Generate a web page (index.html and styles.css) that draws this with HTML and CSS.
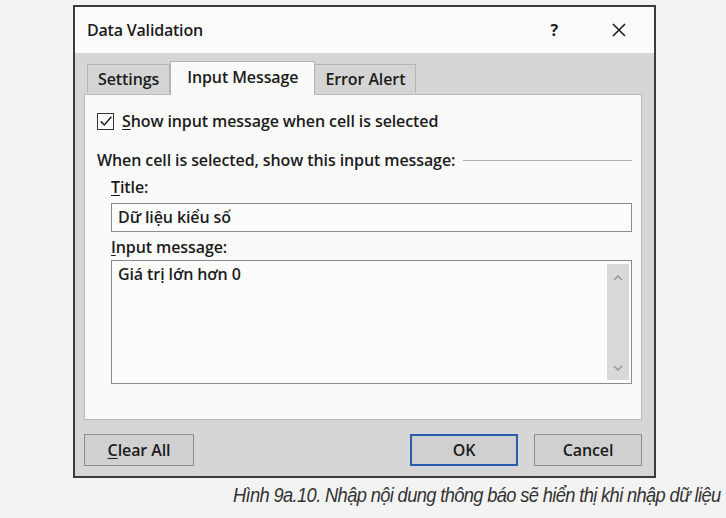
FILE: index.html
```html
<!DOCTYPE html>
<html lang="vi">
<head>
<meta charset="utf-8">
<title>Data Validation</title>
<link rel="stylesheet" href="styles.css">
</head>
<body>
<div class="page">
  <div class="dialog">
    <div class="titlebar">
      <span class="title">Data Validation</span>
      <span class="help">?</span>
      <span class="close">
        <svg width="14" height="14" viewBox="0 0 14 14"><path d="M1 1 L13 13 M13 1 L1 13" stroke="#1f1f1f" stroke-width="1.6" fill="none"/></svg>
      </span>
    </div>
    <div class="body">
      <div class="tabs">
        <div class="tab">Settings</div>
        <div class="tab active">Input Message</div>
        <div class="tab">Error Alert</div>
      </div>
      <div class="panel">
        <div class="check">
          <span class="box">
            <svg width="14" height="14" viewBox="0 0 12 12"><path d="M1.5 6.3 L4.6 9.4 L10.6 2.4" stroke="#222" stroke-width="1.3" fill="none"/></svg>
          </span>
          <span><u>S</u>how input message when cell is selected</span>
        </div>
        <div class="group">
          <span>When cell is selected, show this input message:</span>
          <span class="rule"></span>
        </div>
        <div class="fields">
          <div class="label"><u>T</u>itle:</div>
          <div class="input">Dữ liệu kiểu số</div>
          <div class="label"><u>I</u>nput message:</div>
          <div class="textarea">
            <div class="text">Giá trị lớn hơn 0</div>
            <div class="scroll">
              <svg width="10" height="6" viewBox="0 0 10 6"><path d="M1 5 L5 1 L9 5" stroke="#9a9a9a" stroke-width="1.6" fill="none"/></svg>
              <svg width="10" height="6" viewBox="0 0 10 6"><path d="M1 1 L5 5 L9 1" stroke="#9a9a9a" stroke-width="1.6" fill="none"/></svg>
            </div>
          </div>
        </div>
      </div>
      <div class="buttons">
        <button class="btn"><u>C</u>lear All</button>
        <span class="spacer"></span>
        <button class="btn default">OK</button>
        <button class="btn">Cancel</button>
      </div>
    </div>
  </div>
  <p class="caption"><span>Hình 9a.10. Nhập nội dung thông báo sẽ hiển thị khi nhập dữ liệu</span></p>
</div>
</body>
</html>
```

FILE: styles.css
```css
html, body {
  margin: 0;
  padding: 0;
}

body {
  background: #f3f3f3;
  font-family: "Open Sans", "Noto Sans", sans-serif;
  font-weight: 600;
  color: #1c1c1c;
}

.page {
  width: 726px;
  height: 518px;
  padding-top: 5px;
  box-sizing: border-box;
  overflow: hidden;
}

/* window frame */
.dialog {
  margin-left: 73px;
  width: 583px;
  border: 2px solid #3c3c3c;
  box-sizing: border-box;
  background: #d6d6d6;
}

.titlebar {
  height: 46px;
  background: #fbfbfb;
  display: flex;
  align-items: center;
  font-size: 16px;
  letter-spacing: -0.2px;
}

.title {
  margin-left: 12px;
  flex: 1;
}

.help {
  font-size: 16px;
  font-weight: 700;
  margin-right: 54px;
}

.close {
  display: flex;
  margin-right: 28px;
}

.body {
  padding: 9px 12px 10px 9px;
}

/* tab strip */
.tabs {
  display: flex;
  align-items: flex-end;
  margin-left: 3px;
  height: 32px;
  position: relative;
  z-index: 1;
  font-size: 16px;
  letter-spacing: -0.1px;
}

.tab {
  height: 29px;
  box-sizing: border-box;
  padding: 0 10px;
  display: flex;
  align-items: center;
  background: #d4d4d4;
  border: 1px solid #b4b4b4;
  border-bottom: none;
  margin-bottom: 1px;
}

.tab + .tab {
  border-left: none;
}

.tab.active {
  height: 34px;
  margin-bottom: -1px;
  padding: 0 16px 3px;
  background: #fafafa;
  border: 1px solid #b4b4b4;
  border-bottom: none;
}

.tab.active + .tab {
  border-left: none;
}

.panel {
  height: 326px;
  box-sizing: border-box;
  background: #fafafa;
  border: 1px solid #b8b8b8;
  padding: 17px 9px 0 12px;
  font-size: 16px;
  letter-spacing: -0.1px;
}

.check {
  display: flex;
  align-items: center;
  gap: 8px;
  height: 18px;
}

.box {
  width: 17px;
  height: 17px;
  box-sizing: border-box;
  border: 1px solid #333;
  background: #fdfdfd;
  display: flex;
  align-items: center;
  justify-content: center;
}

u {
  text-decoration-thickness: 1px;
  text-underline-offset: 2px;
}

.group {
  display: flex;
  align-items: center;
  gap: 8px;
  margin-top: 20px;
  height: 20px;
}

.rule {
  flex: 1;
  height: 1px;
  background: #b0b0b0;
}

.fields {
  margin-left: 14px;
  display: flex;
  flex-direction: column;
}

.label {
  height: 20px;
  line-height: 20px;
  margin-top: 7px;
}

.input {
  height: 29px;
  box-sizing: border-box;
  border: 1px solid #8c8c8c;
  background: #fcfcfc;
  padding: 0 6px;
  line-height: 27px;
  margin-top: 6px;
}

/* label that follows the title box sits a little closer */
.input + .label {
  margin-top: 5px;
}

.textarea {
  height: 124px;
  box-sizing: border-box;
  border: 1px solid #8c8c8c;
  background: #fcfcfc;
  margin-top: 3px;
  display: flex;
  padding: 3px 2px 3px 6px;
}

.text {
  flex: 1;
  line-height: 20px;
}

.scroll {
  width: 22px;
  background: #d9d9d9;
  display: flex;
  flex-direction: column;
  justify-content: space-between;
  align-items: center;
  padding: 11px 0 9px;
}

/* dialog buttons */
.buttons {
  display: flex;
  gap: 16px;
  margin-top: 14px;
}

.spacer {
  flex: 1;
}

.btn {
  height: 32px;
  width: 108px;
  box-sizing: border-box;
  border: 1px solid #8e8e8e;
  background: #d0d0d0;
  font-family: inherit;
  font-weight: 600;
  font-size: 16px;
  letter-spacing: -0.1px;
  color: #1c1c1c;
  padding: 0;
}

.btn:first-child {
  width: 110px;
}

.btn.default {
  border: 2px solid #2a5cb0;
}

.caption {
  margin: 6px 0 0 233px;
  white-space: nowrap;
  font-family: "Liberation Sans", Arial, sans-serif;
  font-style: italic;
  font-weight: 400;
  font-size: 20px;
  letter-spacing: -0.7px;
  color: #333;
}

.caption span {
  display: inline-block;
  transform: scaleX(0.915);
  transform-origin: left center;
}
```
